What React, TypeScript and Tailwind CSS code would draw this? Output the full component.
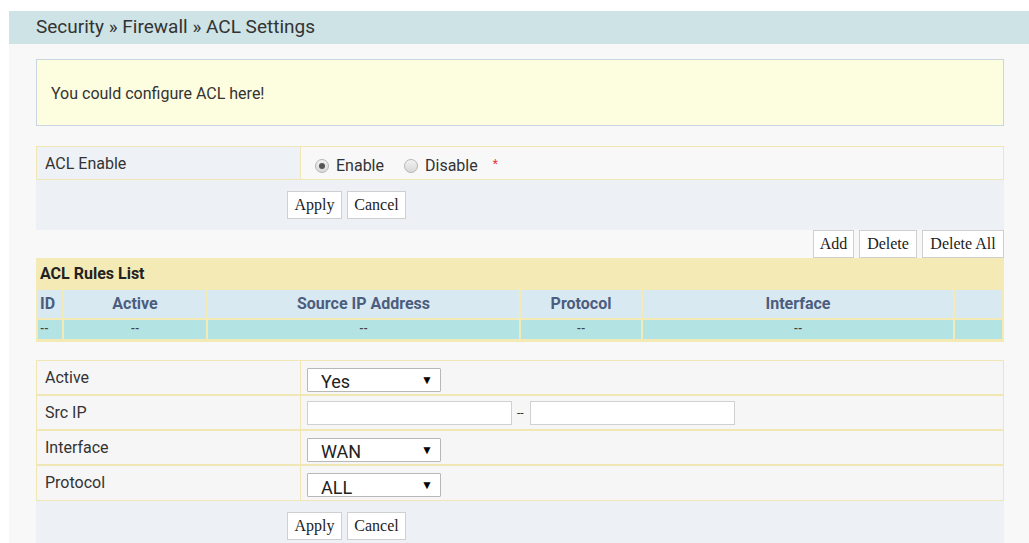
const sans = "font-['Roboto',_'Liberation_Sans',_sans-serif]";
const serif = "font-['Liberation_Serif',_serif]";

const Btn = ({ label, w }: { label: string; w: string }) => (
  <button
    className={`${serif} ${w} h-[28px] bg-white border border-[#cfcfcf] text-[16px] text-[#222] leading-none`}
  >
    {label}
  </button>
);

const Radio = ({ checked }: { checked?: boolean }) => (
  <span className="w-[14px] h-[14px] rounded-full border border-[#b5b5b5] bg-gradient-to-b from-[#f2f2f2] to-[#d8d8d8] flex items-center justify-center">
    {checked && <span className="w-[6px] h-[6px] rounded-full bg-[#555]" />}
  </span>
);

const Select = ({ value }: { value: string }) => (
  <div className="w-[134px] h-[24px] bg-white border border-[#b8b8b8] rounded-[1px] flex items-center justify-between pl-[13px] pr-[7px] mt-[4px]">
    <span className="text-[18px] text-[#222] pt-[4px]">{value}</span>
    <span className="text-[12px] text-black">▼</span>
  </div>
);

const FormRow = ({ label, children }: { label: string; children: React.ReactNode }) => (
  <div className="flex h-[35px] border-b-2 border-[#f1e7b5] last:border-b">
    <div className="w-[264px] border-r border-[#f1e7b5] pl-[8px] pt-[5px] text-[16px]">{label}</div>
    <div className="flex-1 pl-[6px] flex items-center">{children}</div>
  </div>
);

const columns = [
  { name: "ID", align: "justify-start pl-[2px]" },
  { name: "Active", align: "justify-center" },
  { name: "Source IP Address", align: "justify-center" },
  { name: "Protocol", align: "justify-center" },
  { name: "Interface", align: "justify-center" },
  { name: "", align: "justify-center" },
];

export default function App() {
  return (
    <div className={`${sans} bg-white pl-[9px] pt-[11px] min-h-[543px] text-[#333]`}>
      <div className="h-[33px] bg-[#cde3e5] pl-[27px] flex items-center text-[19px] text-[#333]">
        Security » Firewall » ACL Settings
      </div>

      <div className="bg-[#f8f8f8] pl-[27px] pr-[25px] pt-[15px] pb-[10px]">
        <div className="h-[67px] bg-[#fdfde0] border border-[#c9d6df] pl-[14px] pt-[2px] flex items-center text-[16px]">
          You could configure ACL here!
        </div>

        {/* ACL enable switch */}
        <div className="mt-[20px] flex h-[34px] border border-[#f1e7b5]">
          <div className="w-[264px] bg-[#eef1f5] border-r border-[#f1e7b5] pl-[8px] pt-[5px] text-[16px]">
            ACL Enable
          </div>
          <div className="flex-1 flex items-center pl-[14px] pt-[6px] text-[16px]">
            <Radio checked />
            <span className="ml-[7px]">Enable</span>
            <span className="ml-[20px]"><Radio /></span>
            <span className="ml-[7px]">Disable</span>
            <span className="ml-[15px] text-[#ee3344] text-[12px] -mt-[4px]">*</span>
          </div>
        </div>
        <div className="h-[50px] bg-[#edf0f5] flex items-center gap-[5px] pl-[251px]">
          <Btn label="Apply" w="w-[55px]" />
          <Btn label="Cancel" w="w-[59px]" />
        </div>

        {/* rules list */}
        <div className="h-[28px] flex justify-end items-start gap-[5px]">
          <Btn label="Add" w="w-[41px] h-[26px]" />
          <Btn label="Delete" w="w-[58px] h-[26px]" />
          <Btn label="Delete All" w="w-[82px] h-[26px]" />
        </div>
        <div className="bg-[#f3eab6] px-[2px] pb-[3px]">
          <div className="h-[32px] flex items-center pl-[2px] font-bold text-[16px] text-[#222]">ACL Rules List</div>
          <div className="grid grid-cols-[24px_142px_311px_120px_310px_1fr] gap-[2px]">
            {columns.map((c, i) => (
              <div
                key={i}
                className={`h-[28px] bg-[#d9e9f1] flex items-center ${c.align} font-bold text-[16px] text-[#4c5d7e]`}
              >
                {c.name}
              </div>
            ))}
            {columns.map((c, i) => (
              <div key={i} className={`h-[19px] bg-[#b4e3e3] flex items-center ${c.align} text-[11px] font-bold text-[#444]`}>
                {c.name ? "--" : ""}
              </div>
            ))}
          </div>
        </div>

        {/* new rule form */}
        <div className="mt-[18px] border-t border-x border-[#f1e7b5] bg-[#f6f6f6]">
          <FormRow label="Active">
            <Select value="Yes" />
          </FormRow>
          <FormRow label="Src IP">
            <input className="w-[205px] h-[24px] bg-white border border-[#d0d0d0]" />
            <span className="ml-[5px] mr-[6px] text-[12px]">--</span>
            <input className="w-[205px] h-[24px] bg-white border border-[#d0d0d0]" />
          </FormRow>
          <FormRow label="Interface">
            <Select value="WAN" />
          </FormRow>
          <FormRow label="Protocol">
            <Select value="ALL" />
          </FormRow>
        </div>
        <div className="h-[50px] bg-[#edf0f5] flex items-center gap-[5px] pl-[251px]">
          <Btn label="Apply" w="w-[55px]" />
          <Btn label="Cancel" w="w-[59px]" />
        </div>
      </div>
    </div>
  );
}
